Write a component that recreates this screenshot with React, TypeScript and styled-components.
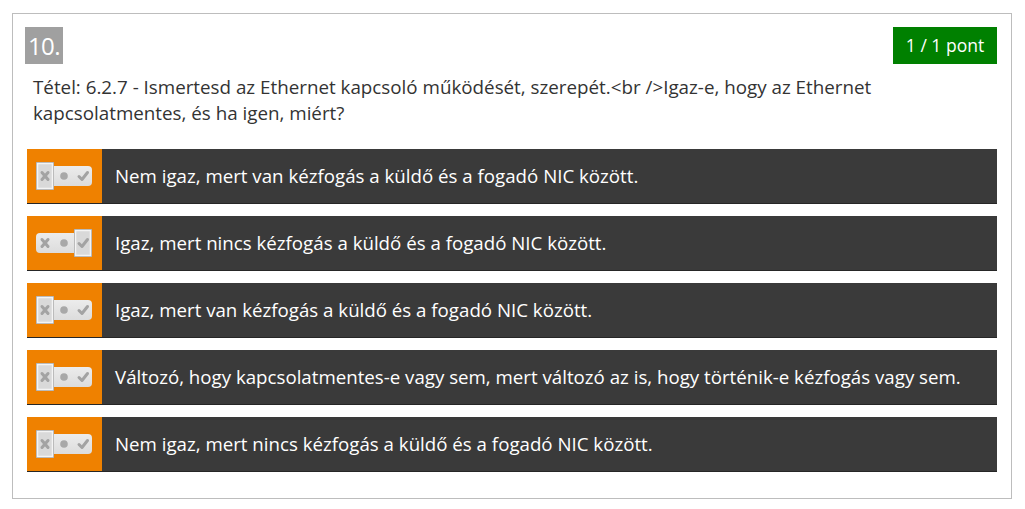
import React from "react";
import styled, { createGlobalStyle } from "styled-components";

const Global = createGlobalStyle`
  html, body { margin: 0; padding: 0; background: #ffffff; }
  body { font-family: "Open Sans", "Liberation Sans", sans-serif; }
`;

const Card = styled.div`
  box-sizing: border-box;
  width: 1000px;
  margin: 13px 0 0 12px;
  border: 1px solid #bdbdbd;
  padding: 13px 14px 26px 12px;
  background: #fff;
`;

const Header = styled.div`
  display: flex;
  justify-content: space-between;
  align-items: flex-start;
`;

const Number = styled.div`
  width: 38px;
  height: 37px;
  background: #a0a0a0;
  color: #fff;
  font-size: 24px;
  line-height: 37px;
  text-align: center;
  letter-spacing: -0.5px;
`;

const Points = styled.div`
  width: 104px;
  height: 37px;
  background: #008000;
  color: #fff;
  font-size: 17.5px;
  line-height: 37px;
  text-align: center;
`;

const Question = styled.div`
  margin: 10px 0 0 8px;
  font-size: 18.8px;
  line-height: 26px;
  color: #333;
`;

const Answers = styled.div`
  display: flex;
  flex-direction: column;
  gap: 12px;
  margin: 23px 0 0 2px;
`;

const Row = styled.div`
  display: flex;
  height: 55px;
  box-sizing: border-box;
  border-bottom: 1px solid #262626;
  background: #3a3a3a;
`;

const ToggleCell = styled.div`
  width: 75px;
  flex: none;
  background: #ef8100;
  display: flex;
  align-items: center;
  justify-content: center;
  padding-right: 1px;
  box-sizing: border-box;
`;

const AnswerText = styled.div`
  display: flex;
  align-items: center;
  padding: 0 0 2px 13px;
  color: #fff;
  font-size: 18.7px;
`;

const Toggle: React.FC<{ state: "no" | "yes" }> = ({ state }) => {
  const bx = state === "no" ? 0 : 38;
  return (
    <svg width="56" height="28" viewBox="0 0 56 28">
      <defs>
        <linearGradient id="pill" x1="0" y1="0" x2="0" y2="1">
          <stop offset="0" stopColor="#ececec" />
          <stop offset="1" stopColor="#dcdcdc" />
        </linearGradient>
      </defs>
      <rect x="0" y="4" width="56" height="20" rx="4" fill="url(#pill)" />
      <rect x={bx + 0.5} y="0.5" width="17" height="27" fill="#d9d9d9" stroke="#a8a8a8" />
      <rect x={bx + 1.5} y="1.5" width="15" height="25" fill="none" stroke="#f4f4f4" strokeWidth="1.5" />
      <g stroke="#a3a3a3" strokeWidth="3" strokeLinecap="round">
        <line x1="6" y1="10.5" x2="12" y2="17.5" />
        <line x1="12" y1="10.5" x2="6" y2="17.5" />
      </g>
      <circle cx="28" cy="14" r="3.8" fill="#a8a8a8" />
      <path d="M43 14.5 L46 17.5 L51.5 10.5" fill="none" stroke="#a3a3a3" strokeWidth="3" strokeLinecap="round" strokeLinejoin="round" />
    </svg>
  );
};

const answers: { text: string; state: "no" | "yes" }[] = [
  { text: "Nem igaz, mert van kézfogás a küldő és a fogadó NIC között.", state: "no" },
  { text: "Igaz, mert nincs kézfogás a küldő és a fogadó NIC között.", state: "yes" },
  { text: "Igaz, mert van kézfogás a küldő és a fogadó NIC között.", state: "no" },
  { text: "Változó, hogy kapcsolatmentes-e vagy sem, mert változó az is, hogy történik-e kézfogás vagy sem.", state: "no" },
  { text: "Nem igaz, mert nincs kézfogás a küldő és a fogadó NIC között.", state: "no" },
];

export default function App() {
  return (
    <>
      <Global />
      <Card>
        <Header>
          <Number>10.</Number>
          <Points>1 / 1 pont</Points>
        </Header>
        <Question>
          Tétel: 6.2.7 - Ismertesd az Ethernet kapcsoló működését, szerepét.&lt;br /&gt;Igaz-e, hogy az Ethernet
          kapcsolatmentes, és ha igen, miért?
        </Question>
        <Answers>
          {answers.map((a, i) => (
            <Row key={i}>
              <ToggleCell>
                <Toggle state={a.state} />
              </ToggleCell>
              <AnswerText>{a.text}</AnswerText>
            </Row>
          ))}
        </Answers>
      </Card>
    </>
  );
}
